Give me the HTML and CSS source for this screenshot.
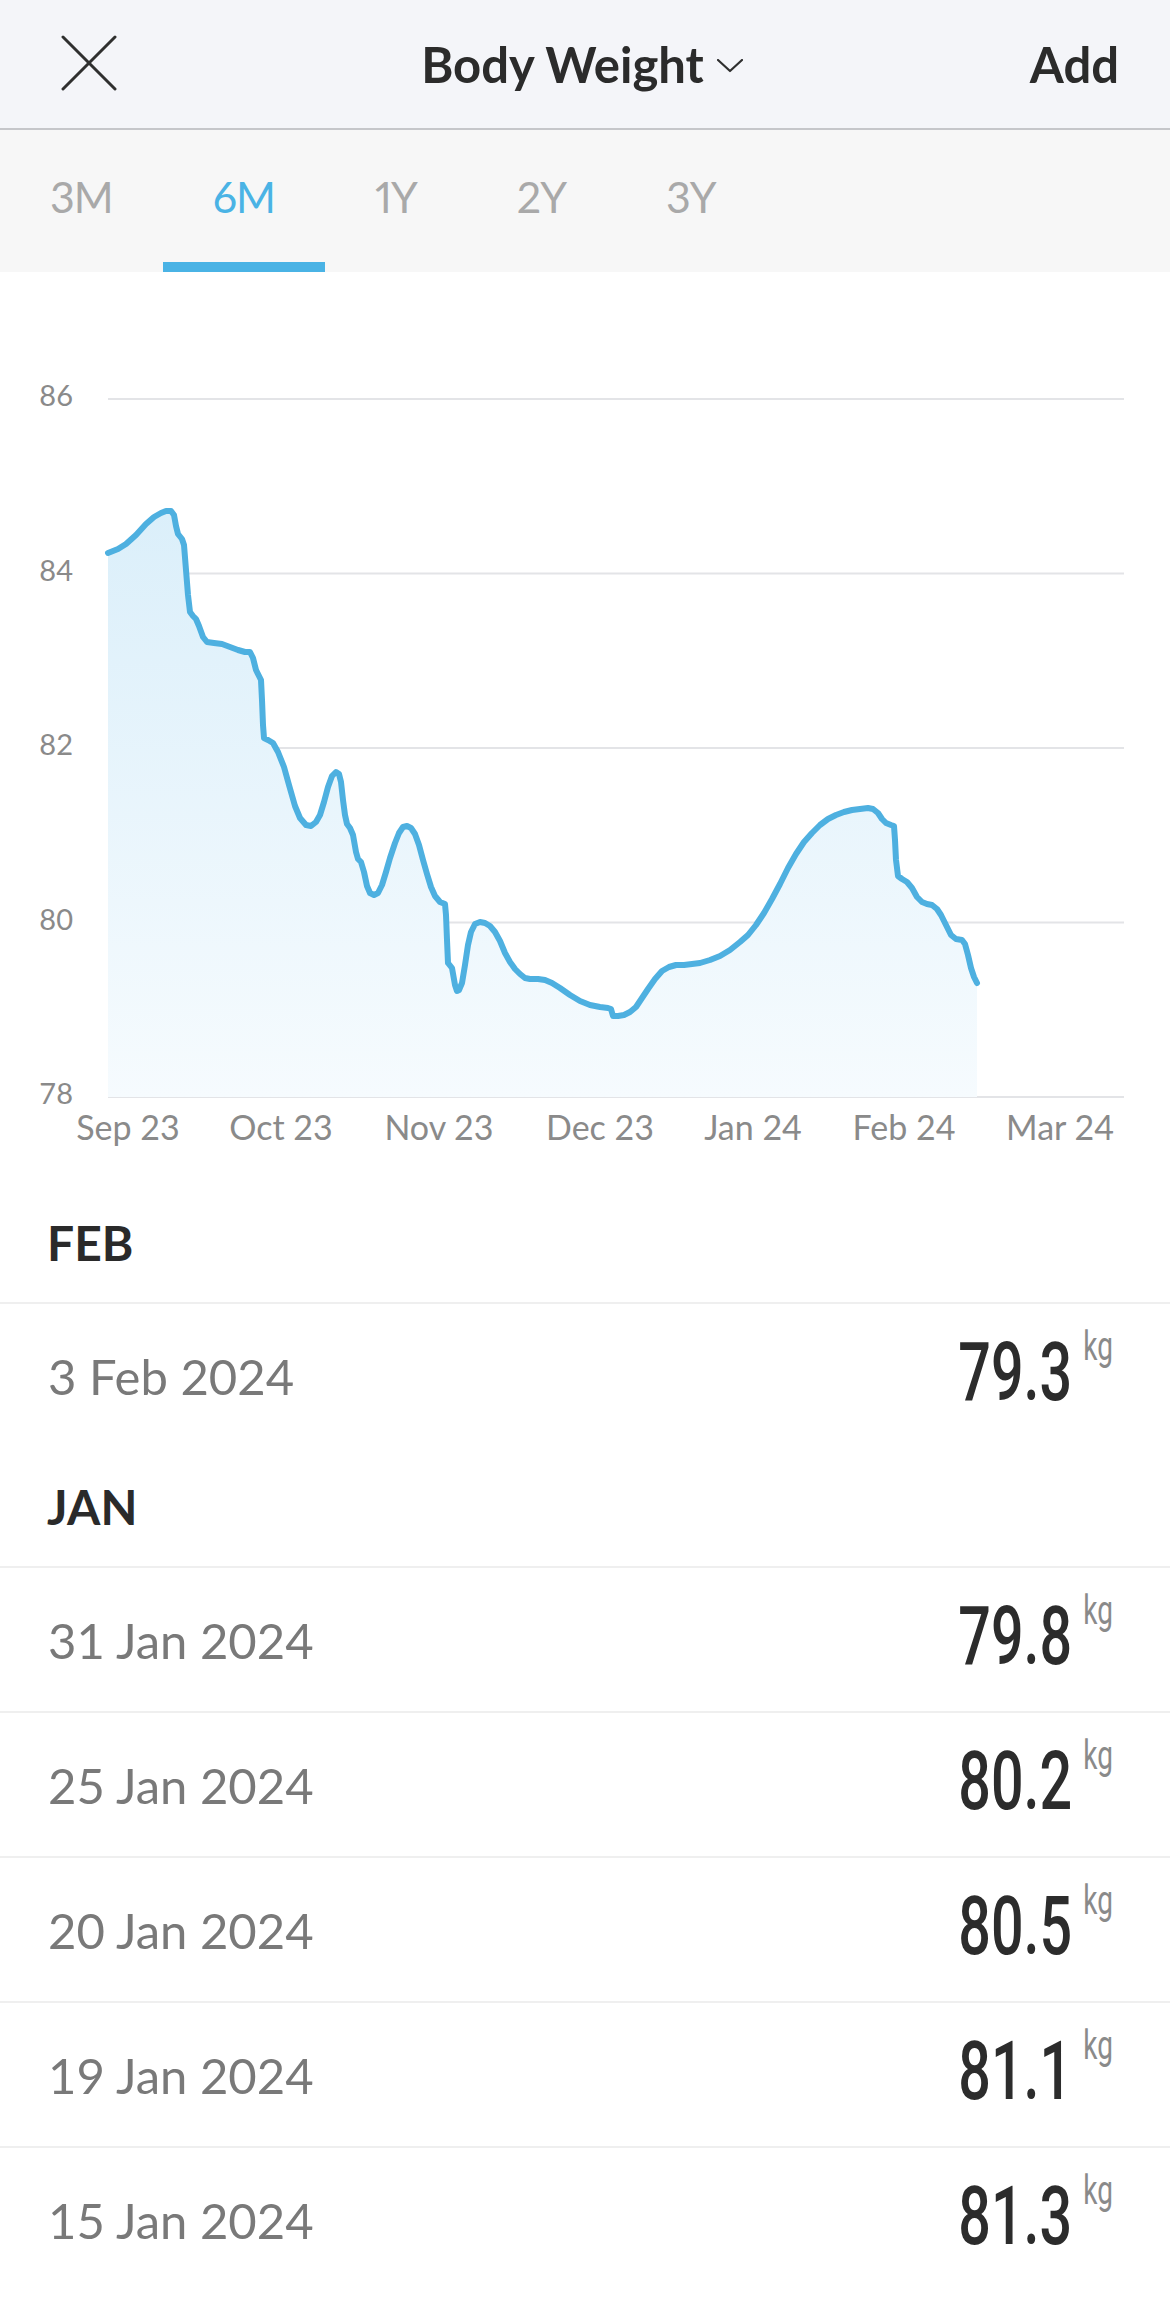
FILE: index.html
```html
<!DOCTYPE html>
<html>
<head>
    <title>Body Weight</title>
    <link rel="stylesheet" href="styles.css">
</head>
<body>
    <header class="topbar">
        <button class="close-btn" type="button">
            <svg width="56" height="56" viewBox="0 0 56 56">
                <line x1="2" y1="2" x2="54" y2="54" />
                <line x1="54" y1="2" x2="2" y2="54" />
            </svg>
        </button>
        <div class="title">
            <span>Body Weight</span>
            <svg class="chevron" width="26" height="14" viewBox="0 0 26 14">
                <polyline points="1,1 13,12 25,1" />
            </svg>
        </div>
        <div class="add">Add</div>
    </header>

    <nav class="ranges">
        <a class="range">3M</a>
        <a class="range active">6M</a>
        <a class="range">1Y</a>
        <a class="range">2Y</a>
        <a class="range">3Y</a>
    </nav>

    <section class="chart">
        <svg width="1170" height="911" viewBox="0 272 1170 911">
            <defs>
                <linearGradient id="area" gradientUnits="userSpaceOnUse" x1="0" y1="511" x2="0" y2="1097">
                    <stop offset="0" stop-color="#dbeffa" />
                    <stop offset="1" stop-color="#f6fbfe" />
                </linearGradient>
            </defs>

            <g class="grid">
                <line x1="108" y1="399" x2="1124" y2="399" />
                <line x1="108" y1="573.5" x2="1124" y2="573.5" />
                <line x1="108" y1="748" x2="1124" y2="748" />
                <line x1="108" y1="922.5" x2="1124" y2="922.5" />
                <line x1="108" y1="1097" x2="1124" y2="1097" />
            </g>

            <g class="y-labels">
                <text x="73" y="406">86</text>
                <text x="73" y="580.5">84</text>
                <text x="73" y="755">82</text>
                <text x="73" y="929.5">80</text>
                <text x="73" y="1104">78</text>
            </g>

            <g class="x-labels">
                <text x="128" y="1140">Sep 23</text>
                <text x="281" y="1140">Oct 23</text>
                <text x="439" y="1140">Nov 23</text>
                <text x="600" y="1140">Dec 23</text>
                <text x="753" y="1140">Jan 24</text>
                <text x="904" y="1140">Feb 24</text>
                <text x="1060" y="1140">Mar 24</text>
            </g>

            <polygon class="area" points="108,1097 108,553 118,549 126,544 136,535 146,524 154,517 161,513 166,511 171,511 174,515 176,526 178,534 182,539 184,545 186,570 188,595 190,612 193,616 196,619 199,626 203,637 207,642 214,643 222,644 230,647 238,650 245,652 250,652 253,658 256,670 259,676 261,680 262,700 263,725 264,738 268,740 273,743 278,752 284,767 289,785 295,806 300,818 306,825 311,826 316,822 320,815 324,802 328,787 332,776 336,772 339,774 341,782 343,800 345,815 347,824 350,828 353,835 356,852 358,859 361,862 364,872 367,886 370,893 374,895 378,893 382,885 386,872 390,858 395,843 399,833 403,827 407,826 411,828 415,834 419,845 423,860 427,874 431,887 435,896 440,902 445,904 446,915 447,940 448,963 452,968 455,985 457,991 459,990 462,983 465,965 468,945 471,932 475,924 480,922 485,923 490,926 495,932 500,941 505,953 510,962 515,969 520,974 525,978 530,979 538,979 545,980 552,983 560,988 570,995 580,1001 590,1005 600,1007 608,1008 611,1009 613,1016 618,1016 624,1015 630,1012 636,1007 642,998 648,989 655,979 662,971 669,967 676,965 684,965 692,964 700,963 710,960 720,956 730,950 740,942 748,935 756,925 764,913 772,899 780,884 788,868 796,854 804,842 812,833 820,825 828,819 836,815 844,812 852,810 860,809 868,808 873,809 878,813 882,819 886,823 891,825 894,826 895,840 896,860 898,876 902,879 907,882 912,888 917,897 922,902 927,904 932,905 937,909 941,915 946,925 951,935 956,939 962,940 965,944 968,955 971,968 974,977 977,983 977,1097" />

            <polyline class="line" points="108,553 118,549 126,544 136,535 146,524 154,517 161,513 166,511 171,511 174,515 176,526 178,534 182,539 184,545 186,570 188,595 190,612 193,616 196,619 199,626 203,637 207,642 214,643 222,644 230,647 238,650 245,652 250,652 253,658 256,670 259,676 261,680 262,700 263,725 264,738 268,740 273,743 278,752 284,767 289,785 295,806 300,818 306,825 311,826 316,822 320,815 324,802 328,787 332,776 336,772 339,774 341,782 343,800 345,815 347,824 350,828 353,835 356,852 358,859 361,862 364,872 367,886 370,893 374,895 378,893 382,885 386,872 390,858 395,843 399,833 403,827 407,826 411,828 415,834 419,845 423,860 427,874 431,887 435,896 440,902 445,904 446,915 447,940 448,963 452,968 455,985 457,991 459,990 462,983 465,965 468,945 471,932 475,924 480,922 485,923 490,926 495,932 500,941 505,953 510,962 515,969 520,974 525,978 530,979 538,979 545,980 552,983 560,988 570,995 580,1001 590,1005 600,1007 608,1008 611,1009 613,1016 618,1016 624,1015 630,1012 636,1007 642,998 648,989 655,979 662,971 669,967 676,965 684,965 692,964 700,963 710,960 720,956 730,950 740,942 748,935 756,925 764,913 772,899 780,884 788,868 796,854 804,842 812,833 820,825 828,819 836,815 844,812 852,810 860,809 868,808 873,809 878,813 882,819 886,823 891,825 894,826 895,840 896,860 898,876 902,879 907,882 912,888 917,897 922,902 927,904 932,905 937,909 941,915 946,925 951,935 956,939 962,940 965,944 968,955 971,968 974,977 977,983" />
        </svg>
    </section>

    <section class="month">
        <h3 class="month-title">FEB</h3>
        <div class="entry">
            <span class="date">3 Feb 2024</span>
            <span class="value"><span class="num">79.3</span><span class="unit">kg</span></span>
        </div>
    </section>

    <section class="month">
        <h3 class="month-title">JAN</h3>
        <div class="entry">
            <span class="date">31 Jan 2024</span>
            <span class="value"><span class="num">79.8</span><span class="unit">kg</span></span>
        </div>
        <div class="entry">
            <span class="date">25 Jan 2024</span>
            <span class="value"><span class="num">80.2</span><span class="unit">kg</span></span>
        </div>
        <div class="entry">
            <span class="date">20 Jan 2024</span>
            <span class="value"><span class="num">80.5</span><span class="unit">kg</span></span>
        </div>
        <div class="entry">
            <span class="date">19 Jan 2024</span>
            <span class="value"><span class="num">81.1</span><span class="unit">kg</span></span>
        </div>
        <div class="entry">
            <span class="date">15 Jan 2024</span>
            <span class="value"><span class="num">81.3</span><span class="unit">kg</span></span>
        </div>
    </section>
</body>
</html>
```

FILE: styles.css
```css
body {
    margin: 0;
    width: 1170px;
    background: #fff;
    font-family: "Lato", "Liberation Sans", sans-serif;
    color: #2b2b2b;
}

.topbar {
    display: grid;
    grid-template-columns: 1fr auto 1fr;
    align-items: center;
    height: 128px;
    padding: 0 51px 0 61px;
    background: #f4f5f9;
    border-bottom: 2px solid #c5c6ca;
}

.close-btn {
    justify-self: start;
    width: 56px;
    height: 56px;
    padding: 0;
    border: none;
    background: none;
    margin-top: -2px;
}

.close-btn svg {
    display: block;
    stroke: #2f2f2f;
    stroke-width: 3;
    stroke-linecap: round;
}

.title {
    display: flex;
    align-items: center;
    gap: 13px;
    margin-right: 16px;
    font-size: 49px;
    font-weight: 700;
}

.chevron {
    fill: none;
    stroke: #2f2f2f;
    stroke-width: 2.2;
    stroke-linecap: round;
    stroke-linejoin: round;
    margin-top: 4px;
}

.add {
    justify-self: end;
    font-size: 49px;
    font-weight: 700;
}

.ranges {
    display: flex;
    height: 142px;
    background: #f7f7f7;
}

.range {
    display: flex;
    align-items: center;
    box-sizing: border-box;
    height: 142px;
    padding: 0 50px;
    border-bottom: 10px solid transparent;
    font-size: 43px;
    font-variant-numeric: proportional-nums;
    letter-spacing: -1px;
    color: #a9a9a9;
}

.range.active {
    color: #4ab3e5;
    border-bottom-color: #4ab3e5;
}

.chart svg {
    display: block;
}

.grid line {
    stroke: #e3e4e7;
    stroke-width: 2;
}

.y-labels text {
    font-family: "Lato", "Liberation Sans", sans-serif;
    font-size: 29px;
    fill: #8a8a8a;
    text-anchor: end;
}

.x-labels text {
    font-family: "Lato", "Liberation Sans", sans-serif;
    font-size: 34px;
    fill: #8a8a8a;
    text-anchor: middle;
}

.area {
    fill: url(#area);
}

.line {
    fill: none;
    stroke: #4eb0e0;
    stroke-width: 6;
    stroke-linejoin: round;
    stroke-linecap: round;
}

.month-title {
    display: flex;
    align-items: center;
    height: 119px;
    margin: 0;
    padding-left: 47px;
    font-size: 48px;
    font-weight: 700;
    color: #2a2a2a;
}

.entry {
    display: flex;
    align-items: center;
    justify-content: space-between;
    height: 143px;
    padding: 0 57px 0 48px;
    border-top: 2px solid #efefef;
}

.date {
    font-size: 49px;
    color: #797979;
}

.value {
    display: flex;
    align-items: flex-start;
    margin-bottom: 7px;
    font-family: "Roboto", "Liberation Sans", sans-serif;
    color: #2c2c2c;
    transform: scaleX(0.7);
    transform-origin: right center;
}

.num {
    font-size: 82px;
    font-weight: 500;
    line-height: 1;
}

.unit {
    margin-top: -4px;
    margin-left: 16px;
    font-size: 40px;
    line-height: 1;
    color: #8a8a8a;
}
```
